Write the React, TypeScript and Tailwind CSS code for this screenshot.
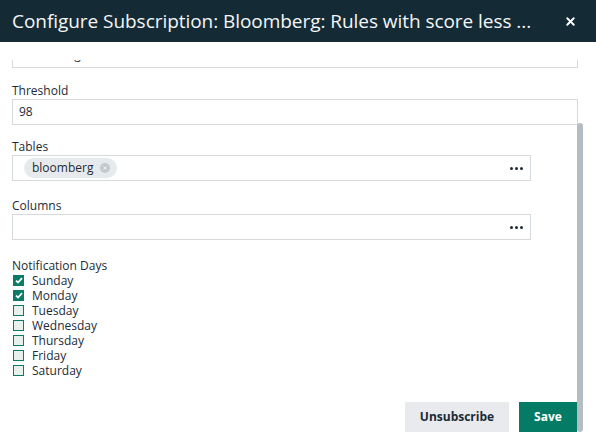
import { X } from "lucide-react"

const days = [
  { name: "Sunday", checked: true },
  { name: "Monday", checked: true },
  { name: "Tuesday", checked: false },
  { name: "Wednesday", checked: false },
  { name: "Thursday", checked: false },
  { name: "Friday", checked: false },
  { name: "Saturday", checked: false },
]

function Dots() {
  return (
    <span className="flex items-center gap-[2px]">
      <span className="w-[3px] h-[3px] rounded-full bg-[#1d2b36]" />
      <span className="w-[3px] h-[3px] rounded-full bg-[#1d2b36]" />
      <span className="w-[3px] h-[3px] rounded-full bg-[#1d2b36]" />
    </span>
  )
}

function Check({ checked }: { checked: boolean }) {
  return (
    <span
      className={`w-[11px] h-[11px] shrink-0 flex items-center justify-center border border-[#0b7a66] ${
        checked ? "bg-[#0b7a66]" : "bg-[#e8f0ee]"
      }`}
    >
      {checked && (
        <svg width="8" height="7" viewBox="0 0 8 7" fill="none">
          <path d="M1 3.6 L3 5.5 L7 1.2" stroke="white" strokeWidth="1.8" />
        </svg>
      )}
    </span>
  )
}

export default function App() {
  return (
    <div
      className="w-[596px] h-[447px] bg-white flex flex-col overflow-hidden text-[#1d2b36]"
      style={{ fontFamily: "'Open Sans', sans-serif" }}
    >
      <div className="h-[42px] shrink-0 bg-[#142b36] flex items-center justify-between pl-3 pr-[19px]">
        <h2 className="text-[19px] text-[#f4f6f7] whitespace-nowrap tracking-[-0.05px]">
          Configure Subscription: Bloomberg: Rules with score less ...
        </h2>
        <X size={13} strokeWidth={3.5} className="text-white" />
      </div>

      <div className="pt-[18px] flex-1 min-h-0 flex">
        <div className="relative h-[377px] w-[584px] overflow-hidden">
          {/* scrolled content */}
          <div className="-mt-[19px] pl-3 pr-[6px] text-[12px]">
            <div className="h-[27px] w-[566px] border border-[#d6dadd] px-[6px] flex items-center">
              Bloomberg
            </div>

            <div className="mt-[15px] leading-[16px]">Threshold</div>
            <div className="h-[26px] w-[566px] border border-[#d6dadd] px-[6px] flex items-center">
              98
            </div>

            <div className="mt-[14px] leading-[16px]">Tables</div>
            <div className="h-[26px] w-[519px] border border-[#d6dadd] pl-[11px] pr-[7px] flex items-center justify-between">
              <span className="h-[20px] rounded-full bg-[#e7eaec] pl-[8px] pr-[7px] flex items-center gap-[7px]">
                <span>bloomberg</span>
                <span className="w-[10px] h-[10px] rounded-full bg-[#c3c9cd] flex items-center justify-center">
                  <svg width="6" height="6" viewBox="0 0 6 6">
                    <path d="M1.5 1.5 L4.5 4.5 M4.5 1.5 L1.5 4.5" stroke="#eef0f2" strokeWidth="1" />
                  </svg>
                </span>
              </span>
              <Dots />
            </div>

            <div className="mt-[17px] leading-[16px]">Columns</div>
            <div className="h-[26px] w-[519px] border border-[#d6dadd] pr-[7px] flex items-center justify-end">
              <Dots />
            </div>

            <div className="mt-[18px] leading-[15px]">Notification Days</div>
            <div className="flex flex-col">
              {days.map((d) => (
                <label key={d.name} className="h-[15px] flex items-center gap-[8px] pl-[1px]">
                  <Check checked={d.checked} />
                  <span className="block leading-[15px]">{d.name}</span>
                </label>
              ))}
            </div>

            <div className="mt-[24px] w-[565px] flex justify-end gap-[10px]">
              <button className="h-[30px] w-[104px] bg-[#e8eaed] text-[12px] font-bold text-[#1b2a36]">
                Unsubscribe
              </button>
              <button className="h-[30px] w-[58px] bg-[#037b65] text-[12px] font-bold text-white">
                Save
              </button>
            </div>
          </div>

          {/* scrollbar thumb */}
          <div className="absolute left-[577px] top-[63px] w-[6px] h-[309px] rounded-[3px] bg-[#b5bdc2]" />
        </div>
      </div>
    </div>
  )
}
